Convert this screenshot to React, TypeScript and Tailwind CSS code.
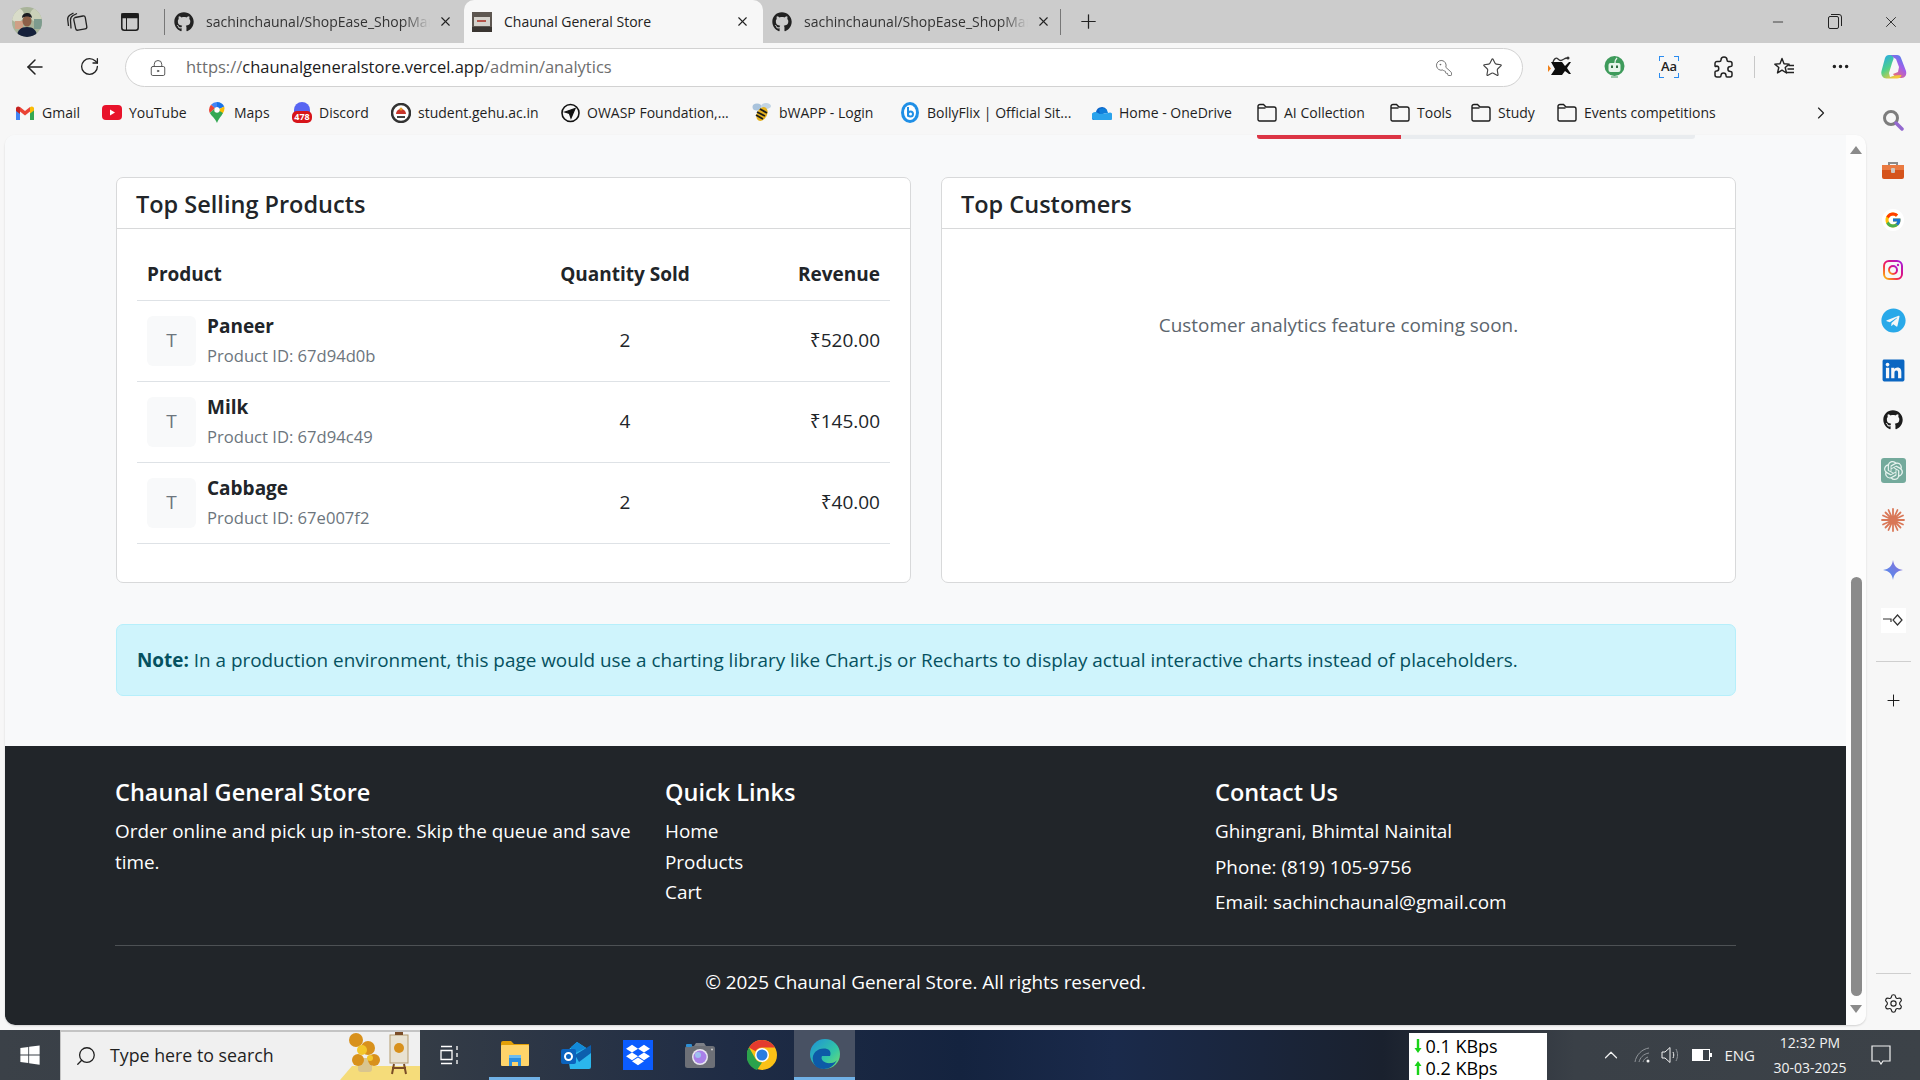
import React from 'react'
import {
  ArrowLeft,
  ChevronRight,
  ChevronUp,
  Ellipsis,
  KeyRound,
  LockKeyhole,
  Minus,
  Plus,
  RotateCw,
  Search,
  Settings,
  Star,
  X,
} from 'lucide-react'
import { FaDropbox, FaGithub, FaLinkedin, FaTelegram, FaWindows } from 'react-icons/fa'
import { FcGoogle } from 'react-icons/fc'
import { SiOpenai } from 'react-icons/si'

const Gmail = () => (
  <svg width="18" height="14" viewBox="0 0 18 14">
    <path d="M0 2v12h4V5z" fill="#4285f4" />
    <path d="M18 2v12h-4V5z" fill="#34a853" />
    <path d="M0 2l4 3v3L0 5z" fill="#c5221f" />
    <path d="M4 1l5 4 5-4v4.500L9 9.500 4 5.500z" fill="#ea4335" />
    <path d="M14 1.200c1.500-1.400 4-.6 4 1.300v2l-4 3z" fill="#fbbc04" />
    <path d="M0 2.500C0 .6 2.500-.2 4 1.200V5L0 4.500z" fill="#c5221f" />
  </svg>
)

const Youtube = () => (
  <svg width="20" height="15" viewBox="0 0 20 15">
    <rect width="20" height="15" rx="4" fill="#e8132b" />
    <path d="M8 4.500l5 3-5 3z" fill="#fff" />
  </svg>
)

const Maps = () => (
  <svg width="16" height="21" viewBox="0 0 16 21">
    <path d="M8 0a8 8 0 0 0-6 2.700l4 3.600A2.600 2.600 0 0 1 8 5.200z" fill="#4285f4" />
    <path d="M2 2.700A8 8 0 0 0 .8 11L6 6.300z" fill="#ea4335" />
    <path d="M8 0a8 8 0 0 1 7.200 4.500L10.400 7A2.600 2.600 0 0 0 8 5.200z" fill="#1a73e8" />
    <path d="M15.200 4.500A8 8 0 0 1 14 11l-5 4-4-4 5.400-4z" fill="#fbbc04" />
    <path d="M.8 11C2.500 14 6 16 8 21c2-5 4.500-7 6-10L6 6.300z" fill="#34a853" />
    <circle cx="8" cy="8" r="2.700" fill="#fff" />
  </svg>
)

const Discord = () => (
  <div className="relative w-[20px] h-[21px]">
    <div className="absolute top-0 left-[2px] w-[16px] h-[14px] rounded-t-full bg-[#5865f2]" />
    <div className="absolute bottom-0 left-0 w-[20px] h-[12px] rounded-[5px] bg-[#d7141a] text-white text-[9px] leading-[12px] font-bold text-center">
      478
    </div>
  </div>
)

const Gehu = () => (
  <svg width="20" height="20" viewBox="0 0 20 20">
    <circle cx="10" cy="10" r="9" fill="#fff" stroke="#333" strokeWidth="2.500" />
    <path d="M5 11a5 5 0 0 1 10 0z" fill="#c7352b" />
    <path d="M6 13h8v2H6z" fill="#444" />
    <circle cx="10" cy="6" r="1.500" fill="#e59b2b" />
  </svg>
)

const Owasp = () => (
  <svg width="19" height="20" viewBox="0 0 19 20" fill="none" stroke="#111">
    <circle cx="9.500" cy="10" r="8.500" strokeWidth="1.600" />
    <path d="M4 9l10-3.500L10 15l-1.500-4.500z" strokeWidth="1.300" fill="#111" />
  </svg>
)

const Bee = () => (
  <svg width="20" height="21" viewBox="0 0 20 21">
    <ellipse cx="5" cy="5" rx="4.500" ry="3.500" fill="#a9c3dc" />
    <ellipse cx="14" cy="4" rx="5" ry="3" fill="#c2d4e4" />
    <ellipse cx="10" cy="12" rx="5" ry="7.500" fill="#e5b21e" transform="rotate(28 10 12)" />
    <path d="M5 10l8 4M4 13l7 4M8 7l7 4" stroke="#1c1c1c" strokeWidth="1.800" />
  </svg>
)

const Bolly = () => (
  <svg width="18" height="21" viewBox="0 0 18 21">
    <ellipse cx="9" cy="10.500" rx="9" ry="10.500" fill="#1f8fe6" />
    <ellipse cx="9" cy="10.500" rx="6" ry="7.500" fill="#fff" />
    <path d="M7 5v9.500" stroke="#1f8fe6" strokeWidth="2" />
    <circle cx="9.500" cy="12" r="2.500" fill="none" stroke="#1f8fe6" strokeWidth="2" />
  </svg>
)

const OneDrive = () => (
  <svg width="20" height="14" viewBox="0 0 20 14">
    <path d="M4 6a6 6 0 0 1 11-2l-6 6-7 4A3.500 3.500 0 0 1 4 7z" fill="#0a64c9" />
    <path d="M7 3.500A6 6 0 0 1 15 4l1 3-8 1z" fill="#0f7fdb" />
    <path d="M3 14a3 3 0 0 1 1-8l4 2 8-1a3.600 3.600 0 0 1 3 7z" fill="#2aa3ec" />
  </svg>
)

const Folder = () => (
  <svg width="20" height="19" viewBox="0 0 20 19" fill="none" stroke="#1c1c1c" strokeWidth="1.400">
    <path d="M1 3.500A2 2 0 0 1 3 1.500h3.500L9 4h8a2 2 0 0 1 2 2v10.500a1.500 1.500 0 0 1-1.500 1.500h-15A1.500 1.500 0 0 1 1 16.500z" />
    <path d="M1 5h7.500" />
  </svg>
)

const Avatar = () => (
  <svg width="30" height="30" viewBox="0 0 30 30" className="rounded-full">
    <rect width="30" height="30" fill="#a9b49a" />
    <circle cx="5" cy="8" r="7" fill="#d9dcc9" />
    <circle cx="25" cy="8" r="7" fill="#c9d0b8" />
    <rect x="22" y="12" width="8" height="10" fill="#7d9b8e" />
    <path d="M3 14h8v8H3z" fill="#cf9f86" />
    <ellipse cx="15" cy="14" rx="4.500" ry="5.500" fill="#8c5f48" />
    <path d="M10 11c0-4 3-5 5.500-5S20 8 20 11c-3-2-7-2-10 0z" fill="#1b1c22" />
    <path d="M5 30c0-7 4-10 10-10s10 3 10 10z" fill="#15203a" />
  </svg>
)

const Collections = () => (
  <svg width="22" height="22" viewBox="0 0 22 22" fill="none" stroke="#222" strokeWidth="1.300" strokeLinejoin="round">
    <path d="M9 6.500l8-1.500a2 2 0 0 1 2.300 1.600l1.500 9a2 2 0 0 1-1.600 2.300l-7.200 1.300a2 2 0 0 1-2.300-1.600L7.800 8.800A2 2 0 0 1 9 6.500z" />
    <path d="M5 17.500L4.500 9c-.1-2 .8-3.500 2.500-4.500L11 2.500" />
    <path d="M2.500 15L1.700 8.500C1.500 6.500 2.500 5 4 4l3.500-2" />
  </svg>
)

const VerticalTabs = () => (
  <svg width="18" height="18" viewBox="0 0 18 18" fill="none" stroke="#1c1c1c" strokeWidth="1.500">
    <rect x=".8" y=".8" width="16.400" height="16.400" rx="2.500" />
    <path d="M1 1h16v3.500H1z" fill="#1c1c1c" />
    <path d="M5.500 4v13" strokeWidth="1" />
  </svg>
)

const Restore = () => (
  <svg width="14" height="15" viewBox="0 0 14 15" fill="none" stroke="#222" strokeWidth="1">
    <rect x=".5" y="2.500" width="10" height="12" rx="1.500" />
    <path d="M3 .5h8a2.500 2.500 0 0 1 2.500 2.500v9" />
  </svg>
)

const StoreFavicon = () => (
  <svg width="20" height="20" viewBox="0 0 20 20">
    <rect width="20" height="20" fill="#5d5650" />
    <rect x="2" y="5" width="16" height="9" fill="#d5d2cc" />
    <path d="M5 8h9v2H5z" fill="#b5544a" />
    <rect y="15" width="20" height="5" fill="#3a3531" />
  </svg>
)

const ToolBadge = () => (
  <svg width="24" height="24" viewBox="0 0 24 24">
    <path d="M0 10l3 3.500-3 3.500z" fill="#f08018" />
    <path d="M3 7h11l3 4 4-4h2l-4 6 4 6h-2l-4-3-3 4H3l4-6z" fill="#0d0d0d" />
    <path d="M5 7c1-3 3-5 5-3s3 2 6 0c1-.8 3-1 4-1" stroke="#333" strokeWidth="1.300" fill="none" />
    <circle cx="20" cy="3" r="1.500" fill="#333" />
  </svg>
)

const GreenBot = () => (
  <svg width="21" height="24" viewBox="0 0 21 24">
    <circle cx="10.500" cy="11" r="10" fill="#3e9b5b" />
    <rect x="4.500" y="8" width="12" height="9" rx="2" fill="#e6f4ea" />
    <rect x="7" y="10.500" width="2" height="2.500" fill="#2e6b41" />
    <rect x="12" y="10.500" width="2" height="2.500" fill="#2e6b41" />
    <path d="M11 8c0-2 1-4 2-5" stroke="#e6f4ea" strokeWidth="1.400" />
    <path d="M7 22h7" stroke="#7fbb93" strokeWidth="1.500" />
  </svg>
)

const ReadAloud = () => (
  <div className="relative w-[20px] h-[22px] flex items-center justify-center text-[13px] font-semibold text-[#222]">
    <span className="absolute top-0 left-0 w-[5px] h-[5px] border-t-[1.500px] border-l-[1.500px] border-[#2b8cf0]" />
    <span className="absolute top-0 right-0 w-[5px] h-[5px] border-t-[1.500px] border-r-[1.500px] border-[#2b8cf0]" />
    <span className="absolute bottom-0 left-0 w-[5px] h-[5px] border-b-[1.500px] border-l-[1.500px] border-[#2b8cf0]" />
    <span className="absolute bottom-0 right-0 w-[5px] h-[5px] border-b-[1.500px] border-r-[1.500px] border-[#2b8cf0]" />
    Aa
  </div>
)

const Extensions = () => (
  <svg width="20" height="22" viewBox="0 0 20 22" fill="none" stroke="#222" strokeWidth="1.500" strokeLinejoin="round">
    <path d="M7 4c0-4 6-4 6 0 0 1 .5 1.500 1.500 1.500h1.500a2 2 0 0 1 2 2v2c0 .8-.7 1-1.500 1-3.500 0-3.500 5 0 5 .8 0 1.500.4 1.500 1.200V19a2 2 0 0 1-2 2h-3c-.8 0-1-.7-1-1.500 0-3.500-5-3.500-5 0 0 .8-.5 1.500-1.200 1.500H3a2 2 0 0 1-2-2v-3c0-.8.7-1 1.500-1 3 0 3-5 0-5C1.700 11 1 10.500 1 9.700V7.500a2 2 0 0 1 2-2h2.500C6.500 5.500 7 5 7 4z" />
  </svg>
)

const FavStar = () => (
  <svg width="21" height="20" viewBox="0 0 21 20" fill="none" stroke="#222" strokeWidth="1.400" strokeLinejoin="round">
    <path d="M8 1.500l2 5.200 5.200.4-4 3.400 1.300 5.500L8 13.200 3.500 16l1.300-5.500-4-3.400 5.200-.4z" />
    <path d="M14.500 8.500H20M13.500 12H20M12.500 15.500H20" />
  </svg>
)

const Copilot = () => (
  <svg width="28" height="28" viewBox="0 0 28 28">
    <defs>
      <linearGradient id="cpA" x1="0" y1="0" x2="0.6" y2="1">
        <stop offset="0" stopColor="#23a6f0" />
        <stop offset=".55" stopColor="#4fd08a" />
        <stop offset="1" stopColor="#f6c83a" />
      </linearGradient>
      <linearGradient id="cpB" x1="1" y1="0" x2="0.3" y2="1">
        <stop offset="0" stopColor="#2d8ff0" />
        <stop offset=".5" stopColor="#a35ee8" />
        <stop offset="1" stopColor="#f2706a" />
      </linearGradient>
    </defs>
    <path d="M9 2h8c2 0 3.500 1 4 3l5 13c1 4-1 7-4.500 7H16l-3-4 5-2 1-5-3-8z" fill="url(#cpB)" />
    <path d="M9 2C7 2 5.800 3.200 5 5L1.500 18C.5 22 3 25.500 6.500 25.500H17c2.500 0 4-1.500 4.500-3.500l-7 .5L10 24l-1-4 3-10 1.500-4C14 4 12 2 9 2z" fill="url(#cpA)" />
  </svg>
)

const Toolbox = () => (
  <svg width="22" height="18" viewBox="0 0 22 18">
    <path d="M7 5V2h8v3" fill="none" stroke="#8c8c8c" strokeWidth="2" />
    <rect y="4" width="22" height="14" rx="2" fill="#d5531b" />
    <rect y="4" width="22" height="5" fill="#ea7a41" />
    <rect x="9" y="7" width="4" height="5" rx="1" fill="#cfc6bf" />
  </svg>
)

const ColorSearch = () => (
  <svg width="22" height="22" viewBox="0 0 22 22" fill="none">
    <circle cx="9" cy="9" r="6.500" stroke="#7d7d7d" strokeWidth="3" />
    <path d="M14 14l6 6" stroke="#9368cf" strokeWidth="3.500" strokeLinecap="round" />
  </svg>
)

const Instagram = () => (
  <svg width="20" height="20" viewBox="0 0 20 20" fill="none">
    <defs>
      <linearGradient id="igA" x1="0" y1="1" x2="1" y2="0">
        <stop offset="0" stopColor="#fdc401" />
        <stop offset=".45" stopColor="#f0135e" />
        <stop offset="1" stopColor="#a31be0" />
      </linearGradient>
    </defs>
    <rect x="1" y="1" width="18" height="18" rx="5" stroke="url(#igA)" strokeWidth="2" />
    <circle cx="10" cy="10" r="4" stroke="url(#igA)" strokeWidth="2" />
    <circle cx="15" cy="5" r="1.200" fill="#c41ac0" />
  </svg>
)

const Claude = () => (
  <svg width="24" height="24" viewBox="0 0 24 24" stroke="#d97757" strokeWidth="1.800" strokeLinecap="round">
    <path d="M12 1v22M1 12h22M4.500 4.500l15 15M19.500 4.500l-15 15M7.500 2l9 20M16.500 2l-9 20M2 7.500l20 9M22 7.500l-20 9" />
    <circle cx="12" cy="12" r="2.500" fill="#d97757" stroke="none" />
  </svg>
)

const Gemini = () => (
  <svg width="20" height="20" viewBox="0 0 20 20">
    <defs>
      <linearGradient id="gmA" x1="0" y1="1" x2="1" y2="0">
        <stop offset="0" stopColor="#4b8ff0" />
        <stop offset="1" stopColor="#8e6fd8" />
      </linearGradient>
    </defs>
    <path d="M10 0c.8 6 4 9.200 10 10-6 .8-9.200 4-10 10-.8-6-4-9.200-10-10 6-.8 9.200-4 10-10z" fill="url(#gmA)" />
  </svg>
)

const DashDiamond = () => (
  <div className="w-[25px] h-[25px] bg-white flex items-center justify-center">
    <svg width="20" height="12" viewBox="0 0 20 12" fill="none" stroke="#333" strokeWidth="1.200">
      <path d="M0 5h8v3" />
      <path d="M14.500 1l4.500 5-4.500 5L10 6z" />
    </svg>
  </div>
)

const Explorer = () => (
  <svg width="28" height="25" viewBox="0 0 28 25">
    <path d="M0 2a2 2 0 0 1 2-2h8l3 3h15v5H0z" fill="#e3a008" />
    <rect y="4" width="28" height="21" rx="1" fill="#ffd46a" />
    <path d="M8 25v-8h12v8h-3v-4h-6v4z" fill="#2c8fe0" />
    <path d="M8 14h12v3H8z" fill="#6cbcf0" />
  </svg>
)

const Outlook = () => (
  <svg width="30" height="27" viewBox="0 0 30 27">
    <path d="M6 9l10-9 14 9v16a2 2 0 0 1-2 2H9z" fill="#2bb6ec" />
    <path d="M10 5l6-5 9 6-15 7z" fill="#1289d8" />
    <path d="M14 13l16-10v8L18 20z" fill="#0c5fae" />
    <rect y="7" width="15" height="15" rx="2" fill="#0b63bd" />
    <circle cx="7.500" cy="14.500" r="3.500" fill="none" stroke="#fff" strokeWidth="2" />
  </svg>
)

const Camera = () => (
  <svg width="30" height="25" viewBox="0 0 30 25">
    <rect y="3" width="30" height="22" rx="2.500" fill="#6d7077" />
    <path d="M9 3l2-3h8l2 3z" fill="#7d8087" />
    <rect x="1" y="1" width="6" height="3" rx="1" fill="#2d8fd5" />
    <circle cx="15" cy="14" r="8" fill="#e8e6ef" />
    <circle cx="15" cy="14" r="6.500" fill="#a880e8" />
    <circle cx="13" cy="12" r="3" fill="#9ec0f0" />
    <circle cx="27" cy="6.500" r="1" fill="#ccc" />
  </svg>
)

const Chrome = () => (
  <svg width="30" height="30" viewBox="0 0 30 30">
    <circle cx="15" cy="15" r="15" fill="#fbc116" />
    <path d="M15 0a15 15 0 0 1 13 7.500H15a7.500 7.500 0 0 0-6.500 3.750L2 7.500A15 15 0 0 1 15 0z" fill="#e33b2e" />
    <path d="M2 7.500l6.500 11.250A7.500 7.500 0 0 0 15 22.500L10 30A15 15 0 0 1 2 7.500z" fill="#2ba24c" />
    <circle cx="15" cy="15" r="7" fill="#fff" />
    <circle cx="15" cy="15" r="5.500" fill="#2a7de1" />
  </svg>
)

const Edge = () => (
  <svg width="30" height="30" viewBox="0 0 30 30">
    <defs>
      <linearGradient id="edA" x1="0" y1="0" x2="1" y2="1">
        <stop offset="0" stopColor="#1e90d8" />
        <stop offset=".6" stopColor="#32c6a6" />
        <stop offset="1" stopColor="#7be06a" />
      </linearGradient>
    </defs>
    <circle cx="15" cy="15" r="15" fill="url(#edA)" />
    <path d="M3 22C1 13 10 8 17 10c4 1 4 5 3 7h-8c-2 4 3 8 9 7 3 0 5-2 6-3-3 6-8 9-13 9-6 0-10-3-11-8z" fill="#0d5aa7" />
  </svg>
)

const Sunflowers = () => (
  <svg width="90" height="50" viewBox="0 0 90 50">
    <path d="M10 50l12-14h68v14z" fill="#f5dc7a" />
    <rect x="28" y="28" width="14" height="14" rx="3" fill="#d9c58f" />
    <g fill="#d8911c">
      <circle cx="26" cy="10" r="7" />
      <circle cx="38" cy="18" r="7" />
      <circle cx="28" cy="30" r="6" />
      <circle cx="44" cy="30" r="6" />
    </g>
    <g fill="#f3c72b">
      <circle cx="32" cy="20" r="5" />
      <circle cx="40" cy="28" r="3" />
    </g>
    <rect x="60" y="5" width="18" height="28" fill="#e8e2d2" stroke="#b39b6e" />
    <circle cx="69" cy="18" r="5" fill="#d8911c" />
    <path d="M64 34l-2 10M74 34l2 10M62 38h14" stroke="#7a4c26" strokeWidth="2" />
    <rect x="65" y="1" width="8" height="4" fill="#7a4c26" />
  </svg>
)

const NetArrow = ({ up }: { up?: boolean }) => (
  <svg width="8" height="16" viewBox="0 0 8 16" fill="#19d318" className={`ml-[5px] shrink-0 ${up ? '' : 'rotate-180'}`}>
    <path d="M4 1l3.500 5H5.200v9H2.800V6H.5z" />
  </svg>
)

const bookmarks = [
  { label: 'Gmail', icon: <Gmail />, width: 'w-[87px]' },
  { label: 'YouTube', icon: <Youtube />, width: 'w-[105px]' },
  { label: 'Maps', icon: <Maps />, width: 'w-[85px]' },
  { label: 'Discord', icon: <Discord />, width: 'w-[99px]' },
  { label: 'student.gehu.ac.in', icon: <Gehu />, width: 'w-[169px]' },
  { label: 'OWASP Foundation,...', icon: <Owasp />, width: 'w-[192px]' },
  { label: 'bWAPP - Login', icon: <Bee />, width: 'w-[148px]' },
  { label: 'BollyFlix | Official Sit...', icon: <Bolly />, width: 'w-[192px]' },
  { label: 'Home - OneDrive', icon: <OneDrive />, width: 'w-[165px]' },
  { label: 'AI Collection', icon: <Folder />, width: 'w-[133px]' },
  { label: 'Tools', icon: <Folder />, width: 'w-[81px]' },
  { label: 'Study', icon: <Folder />, width: 'w-[86px]' },
  { label: 'Events competitions', icon: <Folder />, width: 'w-[260px]' },
]

const products = [
  { name: 'Paneer', id: '67d94d0b', qty: 2, revenue: '₹520.00' },
  { name: 'Milk', id: '67d94c49', qty: 4, revenue: '₹145.00' },
  { name: 'Cabbage', id: '67e007f2', qty: 2, revenue: '₹40.00' },
]

const sideIcons = [
  <ColorSearch />,
  <Toolbox />,
  <div className="w-[22px] h-[22px] rounded-full bg-white flex items-center justify-center">
    <FcGoogle size={18} />
  </div>,
  <Instagram />,
  <FaTelegram size={25} className="text-[#29a9e9]" />,
  <FaLinkedin size={25} className="text-[#0a66c2]" />,
  <FaGithub size={20} className="text-[#1c1c1c]" />,
  <div className="w-[25px] h-[25px] rounded-[3px] bg-[#74aa9c] flex items-center justify-center">
    <SiOpenai size={19} className="text-[#e8f3ef]" />
  </div>,
  <Claude />,
  <Gemini />,
  <DashDiamond />,
]

const Tab = ({ title, active }: { title: string; active?: boolean }) => (
  <div
    className={`flex items-center h-[43px] w-[299px] shrink-0 ${
      active ? 'pl-[8px] pr-[13px] bg-[#f7f7f7] rounded-t-[10px]' : 'pl-[9px] pr-[11px]'
    }`}
  >
    {active ? <StoreFavicon /> : <FaGithub size={20} className="text-[#222] shrink-0" />}
    <span
      className={`ml-[12px] text-[14px] whitespace-nowrap overflow-hidden flex-1 ${
        active ? 'text-[#222]' : 'text-[#333] [mask-image:linear-gradient(90deg,#000_88%,transparent)]'
      }`}
    >
      {title}
    </span>
    <X size={15} strokeWidth={1.8} className="ml-[8px] text-[#222] shrink-0" />
  </div>
)

export default function App() {
  return (
    <div className="w-[1920px] h-[1080px] overflow-hidden flex flex-col bg-[#f7f7f7] font-['Open_Sans','Noto_Sans',sans-serif] text-[#212529]">
      {/* Tab strip */}
      <div className="h-[43px] shrink-0 bg-[#cccccc] flex items-center">
        <div className="ml-[12px]">
          <Avatar />
        </div>
        <div className="ml-[24px]">
          <Collections />
        </div>
        <div className="ml-[33px]">
          <VerticalTabs />
        </div>
        <div className="ml-[25px] w-px h-[26px] bg-[#777] shrink-0" />
        <Tab title="sachinchaunal/ShopEase_ShopManager" />
        <Tab title="Chaunal General Store" active />
        <Tab title="sachinchaunal/ShopEase_ShopManager" />
        <div className="-ml-[2px] w-px h-[26px] bg-[#777] shrink-0" />
        <Plus size={23} strokeWidth={1.3} className="ml-[16px] text-[#222]" />
        <div className="ml-auto flex items-center text-[#222]">
          <Minus size={16} strokeWidth={1.2} />
          <div className="ml-[42px]">
            <Restore />
          </div>
          <X size={18} strokeWidth={1.2} className="ml-[40px] mr-[20px]" />
        </div>
      </div>

      {/* Toolbar */}
      <div className="h-[47px] shrink-0 flex items-center">
        <ArrowLeft size={24} strokeWidth={1.5} className="ml-[23px] text-[#222]" />
        <RotateCw size={21} strokeWidth={1.5} className="ml-[32px] text-[#222]" />
        <div className="ml-[25px] mt-[2px] w-[1398px] h-[39px] rounded-full bg-white border border-[#d2d2d2] flex items-center">
          <LockKeyhole size={18} strokeWidth={1.3} className="ml-[23px] text-[#555]" />
          <div className="ml-[19px] text-[16.5px] whitespace-nowrap text-[#6e6e6e]">
            https://<span className="text-[#1b1b1b]">chaunalgeneralstore.vercel.app</span>/admin/analytics
          </div>
          <KeyRound size={18} strokeWidth={1.2} className="ml-auto -scale-x-100 text-[#666]" />
          <Star size={21} strokeWidth={1.3} className="ml-[29px] mr-[19px] text-[#444]" />
        </div>
        <div className="ml-[25px]">
          <ToolBadge />
        </div>
        <div className="ml-[32px]">
          <GreenBot />
        </div>
        <div className="ml-[34px]">
          <ReadAloud />
        </div>
        <div className="ml-[35px]">
          <Extensions />
        </div>
        <div className="ml-[20px] w-px h-[22px] bg-[#c8c8c8]" />
        <div className="ml-[19px]">
          <FavStar />
        </div>
        <Ellipsis size={21} strokeWidth={2} className="ml-[35px] text-[#222]" />
        <div className="ml-[29px]">
          <Copilot />
        </div>
      </div>

      <div className="flex-1 min-h-0 flex">
        <div className="w-[1866px] flex flex-col">
          {/* Favorites bar */}
          <div className="h-[45px] shrink-0 flex items-center pl-[15px] text-[14px] text-[#1f1f1f]">
            {bookmarks.map((b) => (
              <div key={b.label} className={`${b.width} shrink-0 flex items-center whitespace-nowrap`}>
                <span className="w-[20px] shrink-0 flex items-center justify-center">{b.icon}</span>
                <span className="ml-[7px]">{b.label}</span>
              </div>
            ))}
            <ChevronRight size={20} strokeWidth={1.4} className="ml-[-6px] text-[#222]" />
          </div>

          {/* Page window */}
          <div className="ml-[5px] h-[890px] shrink-0 flex rounded-[10px] overflow-hidden bg-[#fdfdfd] shadow-[0_1px_2px_rgba(0,0,0,0.15)]">
            <div className="w-[1841px] h-[890px] shrink-0 overflow-hidden bg-[#f8f9fa] flex flex-col">
              <div className="ml-[1252px] w-[438px] h-[4px] rounded-b-[3px] overflow-hidden bg-[#e9ecef]">
                <div className="w-[144px] h-full bg-[#dc3545]" />
              </div>

              <div className="pl-[111px] pr-[110px] pt-[38px]">
                <div className="grid grid-cols-2 gap-[30px]">
                  <div className="h-[406px] rounded-[7px] border border-[#d8d9da] bg-white flex flex-col">
                    <div className="h-[51px] px-[19px] pt-[4px] flex items-center border-b border-[#d8d9da] text-[23.500px] font-semibold">
                      Top Selling Products
                    </div>
                    <div className="px-[20px] pt-[19px]">
                      <table className="w-full table-fixed text-[19px]">
                        <thead>
                          <tr className="h-[52px] border-b border-[#dee2e6]">
                            <th className="w-[403px] pl-[10px] text-left font-bold">Product</th>
                            <th className="w-[170px] text-center font-bold">Quantity Sold</th>
                            <th className="pr-[10px] text-right font-bold">Revenue</th>
                          </tr>
                        </thead>
                        <tbody>
                          {products.map((p) => (
                            <tr key={p.id} className="h-[81px] border-b border-[#dee2e6]">
                              <td className="pl-[10px]">
                                <div className="flex items-center">
                                  <div className="w-[49px] h-[50px] rounded-[6px] bg-[#f8f9fa] flex items-center justify-center text-[#6c757d]">
                                    T
                                  </div>
                                  <div className="ml-[11px]">
                                    <div className="font-bold leading-[30px]">{p.name}</div>
                                    <div className="text-[16.600px] leading-[30px] text-[#6c757d]">Product ID: {p.id}</div>
                                  </div>
                                </div>
                              </td>
                              <td className="text-center">{p.qty}</td>
                              <td className="pr-[10px] text-right">{p.revenue}</td>
                            </tr>
                          ))}
                        </tbody>
                      </table>
                    </div>
                  </div>

                  <div className="h-[406px] rounded-[7px] border border-[#d8d9da] bg-white flex flex-col">
                    <div className="h-[51px] px-[19px] pt-[4px] flex items-center border-b border-[#d8d9da] text-[23.500px] font-semibold">
                      Top Customers
                    </div>
                    <div className="pt-[82px] text-center text-[18.900px] leading-[29px] text-[#5c656d]">
                      Customer analytics feature coming soon.
                    </div>
                  </div>
                </div>

                <div className="mt-[41px] h-[72px] px-[20px] flex items-center rounded-[7px] border border-[#b6effb] bg-[#cff4fc] text-[18.900px] text-[#055160]">
                  <div>
                    <span className="font-bold">Note:</span> In a production environment, this page would use a charting library like Chart.js or Recharts to display actual interactive charts instead of placeholders.
                  </div>
                </div>
              </div>

              {/* Footer */}
              <div className="mt-[50px] h-[279px] shrink-0 bg-[#212529] text-white pl-[110px] pr-[110px] pt-[32px] text-[18.900px]">
                <div className="grid grid-cols-[550px_550px_1fr]">
                  <div className="pr-[25px]">
                    <div className="text-[23.500px] font-semibold leading-[29px] mb-[9px]">Chaunal General Store</div>
                    <div className="leading-[30.500px]">Order online and pick up in-store. Skip the queue and save time.</div>
                  </div>
                  <div>
                    <div className="text-[23.500px] font-semibold leading-[29px] mb-[9px]">Quick Links</div>
                    <div className="leading-[30.500px]">Home</div>
                    <div className="leading-[30.500px]">Products</div>
                    <div className="leading-[30.500px]">Cart</div>
                  </div>
                  <div>
                    <div className="text-[23.500px] font-semibold leading-[29px] mb-[9px]">Contact Us</div>
                    <div className="leading-[30.500px] mb-[5px]">Ghingrani, Bhimtal Nainital</div>
                    <div className="leading-[30.500px] mb-[5px]">Phone: (819) 105-9756</div>
                    <div className="leading-[30.500px]">Email: sachinchaunal@gmail.com</div>
                  </div>
                </div>
                <div className="mt-[27px] h-px bg-[#4d5154]" />
                <div className="mt-[22px] text-center leading-[29px]">© 2025 Chaunal General Store. All rights reserved.</div>
              </div>
            </div>

            {/* Scrollbar */}
            <div className="flex-1 flex flex-col items-center pt-[11px] pb-[12px]">
              <div className="w-0 h-0 border-x-[6px] border-x-transparent border-b-[8px] border-b-[#8a8a8a]" />
              <div className="mt-auto w-[11px] h-[419px] rounded-full bg-[#8b8b8b]" />
              <div className="mt-[9px] w-0 h-0 border-x-[6px] border-x-transparent border-t-[8px] border-t-[#8a8a8a]" />
            </div>
          </div>
        </div>

        {/* Edge sidebar */}
        <div className="flex-1 flex flex-col items-center pt-[5px]">
          {sideIcons.map((icon, i) => (
            <div key={i} className="h-[50px] shrink-0 flex items-center justify-center">
              {icon}
            </div>
          ))}
          <div className="mt-[16px] w-[35px] h-px bg-[#cfcfcf]" />
          <div className="mt-[13px] h-[50px] flex items-center">
            <Plus size={19} strokeWidth={1.2} className="text-[#111]" />
          </div>
          <div className="mt-auto w-[35px] h-px bg-[#cfcfcf]" />
          <div className="mt-[4px] mb-[2px] h-[50px] flex items-center">
            <Settings size={21} strokeWidth={1.3} className="text-[#222]" />
          </div>
        </div>
      </div>

      {/* Taskbar */}
      <div className="h-[50px] shrink-0 flex items-center text-white bg-[linear-gradient(90deg,#3b4148_0%,#343c46_22%,#1f2c45_38%,#14233f_50%,#1a2a4b_58%,#1a212e_72%,#3a4047_82%,#3c4248_100%)]">
        <div className="w-[60px] flex justify-center">
          <FaWindows size={22} />
        </div>
        <div className="w-[360px] h-[50px] bg-[#f0f0f0] border-t-2 border-l border-[#c4c4c4] flex items-center text-[#1f1f1f] relative overflow-hidden">
          <Search size={22} strokeWidth={1.4} className="ml-[14px] -scale-x-100" />
          <span className="ml-[13px] text-[17.800px] -mt-[1px]">Type here to search</span>
          <div className="absolute right-0 bottom-0">
            <Sunflowers />
          </div>
        </div>
        <div className="w-[60px] flex justify-center">
          <svg width="20" height="20" viewBox="0 0 20 20" fill="none" stroke="#fff" strokeWidth="1.300">
            <path d="M1 1.500h11M1 18.500h11M1 5.500h11v9H1zM17 1v4M17 8v4M17 15v4" />
          </svg>
        </div>
        {[<Explorer />, <Outlook />, <FaDropbox size={24} />, <Camera />, <Chrome />, <Edge />].map((icon, i) => (
          <div
            key={i}
            className={`h-[50px] flex items-center justify-center ${
              i === 5
                ? 'w-[61px] ml-[1px] bg-[#485163] border-b-[3px] border-[#70b1e6]'
                : i === 0
                  ? 'w-[51px] ml-[9px] mr-[5px] border-b-[3px] border-[#70b1e6]'
                  : 'w-[62px]'
            }`}
          >
            {i === 2 ? (
              <div className="w-[30px] h-[30px] bg-[#0b5cff] flex items-center justify-center">{icon}</div>
            ) : (
              icon
            )}
          </div>
        ))}
        <div className="ml-auto w-[138px] h-[47px] self-end bg-white text-black text-[18px] leading-[22px] flex flex-col justify-center">
          <div className="flex items-center whitespace-nowrap">
            <NetArrow />
            <span className="ml-[3px]">0.1 KBps</span>
          </div>
          <div className="flex items-center whitespace-nowrap">
            <NetArrow up />
            <span className="ml-[3px]">0.2 KBps</span>
          </div>
        </div>
        <div className="flex items-center text-[#f2f2f2]">
          <ChevronUp size={22} strokeWidth={1.3} className="ml-[53px]" />
          <svg width="18" height="16" viewBox="0 0 18 16" fill="none" stroke="#8f9499" strokeWidth="1" className="ml-[12px]">
            <path d="M1 15C2 8 8 2 15 1M5 15c1-4 4-8 10-9M9 15c.5-2 2-4 5-5" />
            <circle cx="14" cy="14" r="1.500" fill="#f2f2f2" stroke="none" />
          </svg>
          <svg width="20" height="18" viewBox="0 0 20 18" fill="none" stroke="#f2f2f2" strokeWidth="1" className="ml-[9px]">
            <path d="M1 6h3l5-4.500v15L4 12H1z" />
            <path d="M12 6c1 2 1 4 0 6" />
            <path d="M15 3c2 4 2 8 0 12" stroke="#8f9499" />
          </svg>
          <div className="ml-[11px] w-[18px] h-[12px] border border-white flex items-stretch relative">
            <div className="w-[10px] bg-white" />
            <div className="absolute -right-[3px] top-[3px] w-[2px] h-[4px] bg-white" />
          </div>
          <span className="ml-[14px] text-[15px]">ENG</span>
          <div className="ml-[12px] w-[86px] text-center text-[14px] leading-[25px] whitespace-nowrap">
            <div>12:32 PM</div>
            <div>30-03-2025</div>
          </div>
          <svg width="20" height="20" viewBox="0 0 20 20" fill="none" stroke="#f2f2f2" strokeWidth="1.200" className="ml-[18px] mr-[29px]">
            <path d="M1 1h18v15h-7l-2 3-2-3H1z" />
          </svg>
        </div>
      </div>
    </div>
  )
}
